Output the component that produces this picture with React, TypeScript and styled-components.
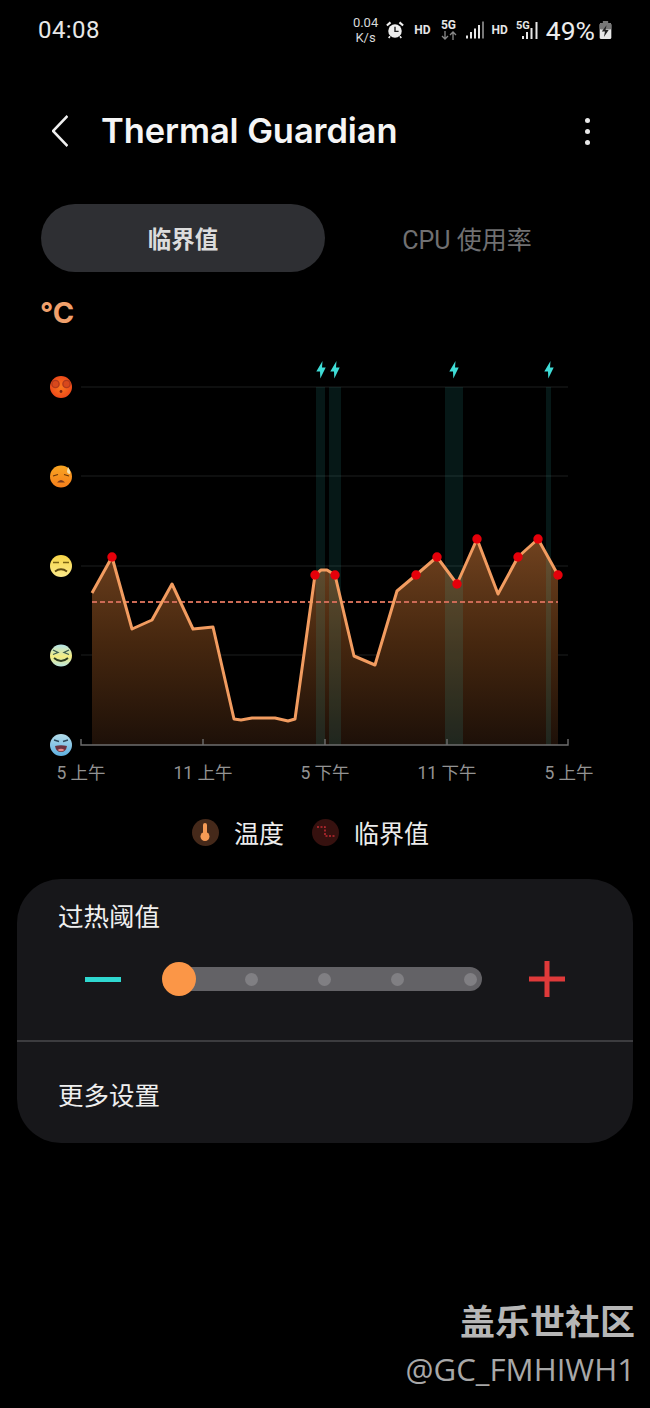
import * as React from "react";
import styled, { createGlobalStyle } from "styled-components";

const GlobalStyle = createGlobalStyle`
  html, body {
    margin: 0;
    padding: 0;
    background: #000;
  }
  body {
    font-family: "Inter", "Noto Sans CJK SC", sans-serif;
  }
`;

const Screen = styled.div`
  display: flex;
  flex-direction: column;
  width: 650px;
  height: 1408px;
  overflow: hidden;
  background: #000;
  color: #f2f2f2;
`;

/* status bar */
const StatusBar = styled.div`
  display: flex;
  align-items: center;
  height: 60px;
  padding: 0 38px;
  box-sizing: border-box;
`;
const Clock = styled.div`
  font-family: "Roboto", sans-serif;
  font-size: 24px;
  color: #e8e8e8;
  letter-spacing: 0.4px;
`;
const StatusIcons = styled.div`
  display: flex;
  align-items: center;
  margin-left: auto;
  color: #e6e6e6;
`;
const Speed = styled.div`
  display: flex;
  flex-direction: column;
  font-family: "Roboto", sans-serif;
  font-size: 13px;
  line-height: 15px;
  text-align: center;
  color: #d8d8d8;
  margin-right: 8px;
`;
const TinyLabel = styled.span<{ $gap?: number }>`
  font-family: "Roboto", sans-serif;
  font-weight: 700;
  font-size: 12px;
  color: #e6e6e6;
  margin: 0 ${(p) => p.$gap ?? 0}px;
`;
const StackedNet = styled.div`
  display: flex;
  flex-direction: column;
  align-items: center;
  width: 16px;
  margin: -2px 9px 0 0;
  line-height: 12px;
`;
const Battery = styled.span`
  font-family: "Roboto", sans-serif;
  font-size: 26.5px;
  color: #ececec;
  margin: 0 4px 0 7px;
`;

/* header */
const Header = styled.div`
  display: flex;
  align-items: center;
  height: 142px;
  padding: 0 52px;
  box-sizing: border-box;
`;
const Title = styled.h1`
  margin: -2px 0 0 33px;
  font-family: "Inter", sans-serif;
  font-size: 34.5px;
  font-weight: 600;
  letter-spacing: -0.1px;
  color: #f5f5f5;
`;
const Kebab = styled.div`
  display: flex;
  flex-direction: column;
  gap: 6px;
  margin-left: auto;
  margin-right: 8px;
`;
const KebabDot = styled.span`
  width: 5px;
  height: 5px;
  border-radius: 50%;
  background: #e8e8e8;
`;

/* tabs */
const Tabs = styled.div`
  display: grid;
  grid-template-columns: 284px 284px;
  margin: 2px 0 0 41px;
`;
const Tab = styled.div<{ $active?: boolean }>`
  display: flex;
  align-items: center;
  justify-content: center;
  height: 68px;
  border-radius: 34px;
  background: ${(p) => (p.$active ? "#2e2f33" : "transparent")};
  color: ${(p) => (p.$active ? "#dcdcdc" : "#707072")};
  font-size: ${(p) => (p.$active ? 23.5 : 25)}px;
  font-weight: ${(p) => (p.$active ? 700 : 400)};
  font-family: "Roboto", "Noto Sans CJK SC", sans-serif;
`;

/* chart */
const Unit = styled.div`
  height: 68px;
  padding: 25px 0 0 40px;
  box-sizing: border-box;
  font-family: "Inter", sans-serif;
  font-size: 29px;
  line-height: 32px;
  font-weight: 700;
  color: #f0a06c;
`;
const ChartSvg = styled.svg`
  display: block;
  flex: none;
`;
const AxisLabels = styled.div`
  display: grid;
  grid-template-columns: repeat(5, 122px);
  padding: 1px 0 0 20px;
  height: 24px;
`;
const AxisLabel = styled.div`
  text-align: center;
  font-family: "Roboto", "Noto Sans CJK SC", sans-serif;
  font-size: 17.5px;
  line-height: 24px;
  color: #939393;
`;

/* legend */
const Legend = styled.div`
  display: flex;
  align-items: center;
  justify-content: center;
  gap: 28px;
  height: 94px;
  padding: 0 29px 0 0;
  box-sizing: border-box;
`;
const LegendItem = styled.div`
  display: flex;
  align-items: center;
  gap: 15px;
  font-size: 25px;
  color: #ececec;
`;
const LegendBadge = styled.span<{ $bg: string }>`
  display: flex;
  align-items: center;
  justify-content: center;
  width: 27px;
  height: 27px;
  border-radius: 50%;
  background: ${(p) => p.$bg};
`;

/* settings card */
const Card = styled.div`
  margin: 0 17px;
  height: 264px;
  border-radius: 44px;
  background: #17171a;
  flex: none;
`;
const CardLabel = styled.div`
  padding-left: 41px;
  font-size: 25.5px;
  line-height: 38px;
  color: #efefef;
`;
const ThresholdSection = styled.div`
  height: 163px;
  padding-top: 19px;
  box-sizing: border-box;
  border-bottom: 2px solid #3c3c3f;
`;
const SliderRow = styled.div`
  display: flex;
  align-items: center;
  height: 40px;
  margin-top: 23px;
  padding-left: 68px;
`;
const Track = styled.div`
  position: relative;
  display: flex;
  align-items: center;
  gap: 60px;
  width: 307px;
  height: 24px;
  margin: 0 47px 0 54px;
  padding-left: 70px;
  box-sizing: border-box;
  border-radius: 12px;
  background: #636266;
`;
const TrackDot = styled.span`
  width: 13px;
  height: 13px;
  flex: none;
  border-radius: 50%;
  background: #807f83;
`;
const Thumb = styled.span`
  position: absolute;
  left: -13px;
  top: -5px;
  width: 34px;
  height: 34px;
  border-radius: 50%;
  background: #fb9647;
`;
const MoreRow = styled.div`
  display: flex;
  align-items: center;
  height: 101px;
  padding-top: 6px;
  box-sizing: border-box;
`;

/* watermark */
const Watermark = styled.div`
  display: flex;
  flex-direction: column;
  align-items: flex-end;
  margin-top: auto;
  padding: 0 15px 15px 0;
`;
const WatermarkTitle = styled.div`
  font-size: 35px;
  line-height: 45px;
  font-weight: 700;
  color: #b6b6b6;
`;
const WatermarkUser = styled.div`
  font-family: "Open Sans", sans-serif;
  font-size: 31.2px;
  line-height: 48px;
  color: #a8a8a8;
`;

const temps: [number, number][] = [
  [92, 593], [112, 557], [132, 629], [152, 620], [172, 584], [193, 629], [213, 627],
  [234, 719], [241, 720], [252, 718], [275, 718], [288, 721], [295, 719], [315, 575],
  [321, 570], [327, 570], [335, 575], [354, 656], [375, 665], [397, 591], [416, 575],
  [437, 557], [457, 584], [477, 539], [498, 594], [518, 557], [538, 539], [558, 575],
];
const peaks: [number, number][] = [
  [112, 557], [315, 575], [335, 575], [416, 575], [437, 557], [457, 584], [477, 539],
  [518, 557], [538, 539], [558, 575],
];
const bands = [
  [316, 9], [329, 12], [445, 18], [546, 5],
];
const gridLines = [387, 476, 566, 655];
const timeLabels = ["5 上午", "11 上午", "5 下午", "11 下午", "5 上午"];

const linePoints = temps.map((t) => t.join(",")).join(" ");
const areaPoints = `92,745 ${linePoints} 558,745`;

const Bolt = ({ x }: { x: number }) => (
  <path
    transform={`translate(${x} 361)`}
    d="M1.5 0 L-4.7 10.5 L-1 10.5 L-0.7 17.5 L4.7 6.5 L1 6.5 Z"
    fill="#3fdcd6"
  />
);

export default function App() {
  return (
    <Screen>
      <GlobalStyle />
      <StatusBar>
        <Clock>04:08</Clock>
        <StatusIcons>
          <Speed>
            <span>0.04</span>
            <span>K/s</span>
          </Speed>
          <svg width="18" height="18" viewBox="0 0 20 20">
            <circle cx="10" cy="11" r="7.5" fill="#eee" />
            <path d="M10 6.5 V11.5 H14" stroke="#222" strokeWidth="1.6" fill="none" />
            <path d="M1 5 L5 1.5 M19 5 L15 1.5" stroke="#eee" strokeWidth="2.4" />
            <path d="M4.5 17 L3 19 M15.5 17 L17 19" stroke="#eee" strokeWidth="1.8" />
          </svg>
          <TinyLabel $gap={10}>HD</TinyLabel>
          <StackedNet>
            <TinyLabel>5G</TinyLabel>
            <svg width="16" height="9" viewBox="0 0 16 9">
              <path d="M4 0 V8 M1 5 L4 8 L7 5" stroke="#8a8a8a" strokeWidth="1.3" fill="none" />
              <path d="M12 9 V1 M9 4 L12 1 L15 4" stroke="#8a8a8a" strokeWidth="1.3" fill="none" />
            </svg>
          </StackedNet>
          <svg width="18" height="18" viewBox="0 0 18 18">
            <rect x="0" y="14.5" width="2" height="3" fill="#e6e6e6" />
            <rect x="4" y="11" width="2" height="6.5" fill="#e6e6e6" />
            <rect x="8" y="7.5" width="2" height="10" fill="#e6e6e6" />
            <rect x="12" y="4" width="2" height="13.5" fill="#e6e6e6" />
            <rect x="16" y="0.5" width="2" height="17" fill="#777" />
          </svg>
          <TinyLabel $gap={8}>HD</TinyLabel>
          <svg width="23" height="20" viewBox="0 0 23 20">
            <text x="0" y="9" fontFamily="Roboto, sans-serif" fontWeight="700" fontSize="11" fill="#e6e6e6">
              5G
            </text>
            <rect x="6" y="16" width="2" height="3" fill="#e6e6e6" />
            <rect x="10" y="12" width="2" height="7" fill="#e6e6e6" />
            <rect x="14.5" y="8" width="2" height="11" fill="#e6e6e6" />
            <rect x="19.5" y="2" width="2" height="17" fill="#e6e6e6" />
          </svg>
          <Battery>49%</Battery>
          <svg width="13" height="18" viewBox="0 0 12 17">
            <rect x="3.5" y="0" width="5" height="2" fill="#777" />
            <rect x="0.5" y="2" width="11" height="15" rx="1.5" fill="#e8e8e8" />
            <rect x="0.5" y="2" width="11" height="6" rx="1.5" fill="#777" />
            <path d="M7 4 L2.5 10 H5.5 L4.5 15 L9 8.5 H6 Z" fill="#222" />
          </svg>
        </StatusIcons>
      </StatusBar>

      <Header>
        <svg width="16" height="32" viewBox="0 0 16 32">
          <path d="M15.5 1 L1 16 L15.5 31" stroke="#efefef" strokeWidth="2.6" fill="none" />
        </svg>
        <Title>Thermal Guardian</Title>
        <Kebab>
          <KebabDot />
          <KebabDot />
          <KebabDot />
        </Kebab>
      </Header>

      <Tabs>
        <Tab $active>临界值</Tab>
        <Tab>CPU 使用率</Tab>
      </Tabs>

      <Unit>°C</Unit>

      <ChartSvg width="650" height="420" viewBox="0 340 650 420">
        <defs>
          <linearGradient id="area" x1="0" y1="539" x2="0" y2="745" gradientUnits="userSpaceOnUse">
            <stop offset="0" stopColor="#70421f" />
            <stop offset="0.5" stopColor="#46270f" />
            <stop offset="1" stopColor="#1d1008" />
          </linearGradient>
          <radialGradient id="faceHot">
            <stop offset="0" stopColor="#fb7a1e" />
            <stop offset="1" stopColor="#ee4a1a" />
          </radialGradient>
          <linearGradient id="faceWarm" x1="0" y1="0" x2="0" y2="1">
            <stop offset="0" stopColor="#f9a521" />
            <stop offset="1" stopColor="#f57f1c" />
          </linearGradient>
          <linearGradient id="faceMild" x1="0" y1="0" x2="0" y2="1">
            <stop offset="0" stopColor="#f8d648" />
            <stop offset="1" stopColor="#fbe98a" />
          </linearGradient>
          <linearGradient id="faceCool" x1="0" y1="0" x2="0" y2="1">
            <stop offset="0" stopColor="#b4e4ea" />
            <stop offset="0.55" stopColor="#f4ec80" />
            <stop offset="1" stopColor="#b8e6e2" />
          </linearGradient>
          <linearGradient id="faceCold" x1="0" y1="0" x2="0" y2="1">
            <stop offset="0" stopColor="#b3dcea" />
            <stop offset="1" stopColor="#5fb0e0" />
          </linearGradient>
        </defs>

        {gridLines.map((y) => (
          <line key={y} x1="81" x2="568" y1={y} y2={y} stroke="#1c1f1e" strokeWidth="1" />
        ))}

        <polygon points={areaPoints} fill="url(#area)" />
        {bands.map(([x, w]) => (
          <rect key={x} x={x} y="387" width={w} height="358" fill="#33d8d0" opacity="0.11" />
        ))}
        <line x1="92" x2="558" y1="602" y2="602" stroke="#cc6a55" strokeWidth="2" strokeDasharray="5 3" />
        <polyline points={linePoints} fill="none" stroke="#f29c60" strokeWidth="3" strokeLinejoin="round" />
        {peaks.map(([x, y]) => (
          <circle key={x} cx={x} cy={y} r="4.7" fill="#e6000a" />
        ))}

        <path d="M81 739 V745 H568 V739 M203 739 V745 M325 739 V745 M447 739 V745" stroke="#6e6e6e" strokeWidth="1.4" fill="none" />

        <Bolt x={321} />
        <Bolt x={335} />
        <Bolt x={454} />
        <Bolt x={549} />

        {/* level faces */}
        <g>
          <circle cx="61" cy="387" r="11" fill="url(#faceHot)" />
          <circle cx="55.5" cy="384" r="3.6" fill="#d8481c" stroke="#b23a1c" strokeWidth="1.4" />
          <circle cx="66.5" cy="384" r="3.6" fill="#d8481c" stroke="#b23a1c" strokeWidth="1.4" />
          <circle cx="61" cy="391.5" r="1.4" fill="#7a2310" />
        </g>
        <g>
          <circle cx="61" cy="476.5" r="11" fill="url(#faceWarm)" />
          <path d="M53 476 L58 474.5 M64 474.5 L69 476" stroke="#6b3608" strokeWidth="1.3" />
          <path d="M57 482.5 Q61 477.5 65 482.5 Z" fill="#7b3a1c" />
          <path d="M68 467 Q71 471 70 474 Q67 474 67 471 Z" fill="#f3dfae" />
        </g>
        <g>
          <circle cx="61" cy="566" r="11" fill="url(#faceMild)" />
          <path d="M53 562.5 H59 M63 562.5 H69" stroke="#7c6414" strokeWidth="1.6" />
          <path d="M55 571.5 Q61 567 67 571.5" stroke="#5e4a10" strokeWidth="1.8" fill="none" />
        </g>
        <g>
          <circle cx="61" cy="655.5" r="11" fill="url(#faceCool)" />
          <path d="M53 650 L58 652.5 L53 654.5 M69 650 L64 652.5 L69 654.5" stroke="#3d5c50" strokeWidth="1.3" fill="none" />
          <path d="M54 658 Q61 664 68 658" stroke="#2c3a20" strokeWidth="1.8" fill="none" />
        </g>
        <g>
          <circle cx="61" cy="745" r="11" fill="url(#faceCold)" />
          <path d="M54 740 L59 741.5 M63 741.5 L68 740" stroke="#2c4a5c" strokeWidth="1.4" />
          <path d="M55 746 Q61 744.5 67 746 Q66 752 61 752 Q56 752 55 746 Z" fill="#6b3340" />
          <path d="M57.5 750 Q61 747.5 64.5 750 Q61 752.5 57.5 750 Z" fill="#e88a8a" />
        </g>
      </ChartSvg>

      <AxisLabels>
        {timeLabels.map((label, i) => (
          <AxisLabel key={i}>{label}</AxisLabel>
        ))}
      </AxisLabels>

      <Legend>
        <LegendItem>
          <LegendBadge $bg="#45291a">
            <svg width="10" height="20" viewBox="0 0 10 20">
              <rect x="3" y="1" width="4" height="12" rx="2" fill="#f59a55" />
              <circle cx="5" cy="14.5" r="4.5" fill="#f59a55" />
            </svg>
          </LegendBadge>
          温度
        </LegendItem>
        <LegendItem>
          <LegendBadge $bg="#36110f">
            <svg width="20" height="18" viewBox="0 0 20 18">
              <path d="M1 4 H9 V13 H19" stroke="#c02a32" strokeWidth="1.5" strokeDasharray="2 1.5" fill="none" />
            </svg>
          </LegendBadge>
          临界值
        </LegendItem>
      </Legend>

      <Card>
        <ThresholdSection>
          <CardLabel>过热阈值</CardLabel>
          <SliderRow>
            <svg width="36" height="36" viewBox="0 0 36 36">
              <rect x="0" y="16" width="36" height="5" fill="#2fd8d0" />
            </svg>
            <Track>
              <Thumb />
              <TrackDot />
              <TrackDot />
              <TrackDot />
              <TrackDot />
            </Track>
            <svg width="36" height="36" viewBox="0 0 36 36">
              <path d="M0 18 H36 M18 0 V36" stroke="#df3a3a" strokeWidth="5" />
            </svg>
          </SliderRow>
        </ThresholdSection>
        <MoreRow>
          <CardLabel>更多设置</CardLabel>
        </MoreRow>
      </Card>

      <Watermark>
        <WatermarkTitle>盖乐世社区</WatermarkTitle>
        <WatermarkUser>@GC_FMHIWH1</WatermarkUser>
      </Watermark>
    </Screen>
  );
}
